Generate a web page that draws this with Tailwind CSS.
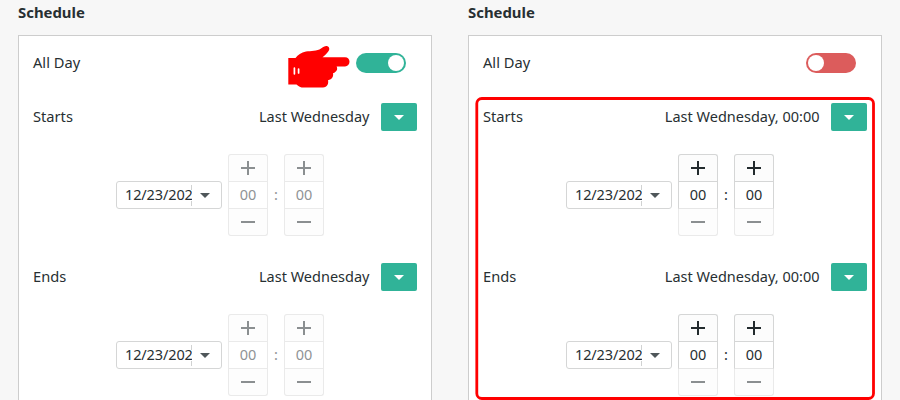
<!DOCTYPE html>
<html lang="en">
<head>
<meta charset="utf-8">
<title>Schedule</title>
<script src="https://cdn.jsdelivr.net/npm/@tailwindcss/browser@4"></script>
</head>
<body class="bg-[#f7f7f7] overflow-hidden">
<main id="app" class="relative w-[900px] h-[400px] overflow-hidden flex gap-9 pl-[18px] font-['Noto_Sans',sans-serif] text-[14.5px] leading-5 text-[#272f32]"></main>
<script>
const plus = '<svg class="w-[14px] h-[14px]" viewBox="0 0 14 14" fill="currentColor"><path d="M6 0h2v6h6v2H8v6H6V8H0V6h6z"/></svg>';
const minus = '<svg class="w-[14px] h-[14px]" viewBox="0 0 14 14" fill="currentColor"><path d="M0 6h14v2H0z"/></svg>';

const spinner = on => `
  <div class="w-10 h-[82px] flex flex-col">
    <div class="h-[27px] border border-b-0 rounded-t-[3px] flex items-center justify-center ${on ? 'border-[#d5d6d6] bg-[#fcfcfc] text-[#232b2e]' : 'border-[#eaeaea] bg-[#fdfdfd] text-[#8b8f91]'}">${plus}</div>
    <div class="h-7 border pb-0.5 flex items-center justify-center bg-white ${on ? 'border-[#d5d6d6] border-b-[#e6e6e6] text-[#272f32]' : 'border-[#eaeaea] text-[#8f9395]'}">00</div>
    <div class="h-[27px] border border-t-0 rounded-b-[3px] flex items-center justify-center border-[#eaeaea] bg-[#fdfdfd] text-[#8b8f91]">${minus}</div>
  </div>`;

const picker = on => `
  <div class="flex items-center h-[82px] ml-[83px]">
    <div class="w-[106px] h-7 mr-1.5 border border-[#d5d6d6] rounded-[3px] bg-white flex items-center pl-2">
      <div class="w-[67px] pb-0.5 overflow-hidden whitespace-nowrap tracking-[-0.12px]">12/23/2020</div>
      <div class="w-px h-[21px] -ml-px flex flex-col justify-between"><i class="h-[5px] bg-[#d0d2d2]"></i><i class="h-[5px] bg-[#d0d2d2]"></i></div>
      <svg class="w-[10px] h-[5px] ml-[8px]" viewBox="0 0 10 5" fill="#4f575a"><path d="M0 0h10L5 5z"/></svg>
    </div>
    ${spinner(on)}
    <div class="w-4 pb-0.5 text-center ${on ? '' : 'text-[#8f9395]'}">:</div>
    ${spinner(on)}
  </div>`;

const row = (name, value) => `
  <div class="flex items-center h-7">
    <span class="pb-0.5 text-[14.67px] leading-5">${name}</span>
    <span class="ml-auto mr-[11.5px] pb-0.5">${value}</span>
    <div class="w-9 h-7 rounded-[2px] bg-[#30b398] flex items-center justify-center">
      <svg class="w-[10px] h-[5px] mt-px" viewBox="0 0 10 5" fill="#fff"><path d="M0 0h10L5 5z"/></svg>
    </div>
  </div>`;

const panel = (on, value) => `
  <section class="w-[414px]">
    <h2 class="font-bold text-[14.9px] leading-5 h-5 mt-[2px] mb-[13px]">Schedule</h2>
    <div class="h-[380px] border border-[#cdcdcd] bg-white px-[14px] pt-[13px]">
      <div class="flex items-center justify-between h-7 mb-[26px]">
        <span class="pb-0.5 text-[14.67px] leading-5">All Day</span>
        <div class="w-[50px] h-5 mr-[11px] rounded-full p-0.5 flex items-center ${on ? 'bg-[#dc5c5c] justify-start' : 'bg-[#30b398] justify-end'}"><i class="w-4 h-4 rounded-full bg-white"></i></div>
      </div>
      ${row('Starts', value)}
      <div class="mt-[23px] mb-[27px]">${picker(on)}</div>
      ${row('Ends', value)}
      <div class="mt-[23px]">${picker(on)}</div>
    </div>
  </section>`;

document.getElementById('app').innerHTML =
  panel(false, 'Last Wednesday') + panel(true, 'Last Wednesday, 00:00') + `
  <svg class="absolute left-[280px] top-[40px] w-[75px] h-[50px]" viewBox="0 0 75 50">
    <path fill="#f00" d="M8.3 18H15.5C18 15 21 12.5 26 11.6C31 10.8 37 11.3 41 8.5C43.5 6.7 45.5 5.5 47.5 6.2C49.5 7 49.8 9.3 48.6 11C47 13.5 44.5 15.5 42.5 17.3H65C67.8 17.3 69.5 19.3 69.5 21.8C69.5 24.4 67.7 26.4 65 26.4H56.6C57.8 28.5 57.3 31.5 53 33.3C53.7 36 52.3 39.5 48 40.3C48.8 43.5 47.3 47.6 43 47.6H24C20.5 47.6 18.5 46.5 16.5 44.5H8.3Z"/>
    <path stroke="#fff" stroke-width="1.7" stroke-linecap="round" d="M14.4 28.2V33.8M18.6 29V33"/>
  </svg>
  <svg class="absolute left-[470px] top-[90px] w-[410px] h-[310px]" viewBox="0 0 410 310"><rect x="6.8" y="8.5" width="396.7" height="300" rx="5" fill="none" stroke="#f00" stroke-width="2.8"/></svg>`;
</script>
</body>
</html>
